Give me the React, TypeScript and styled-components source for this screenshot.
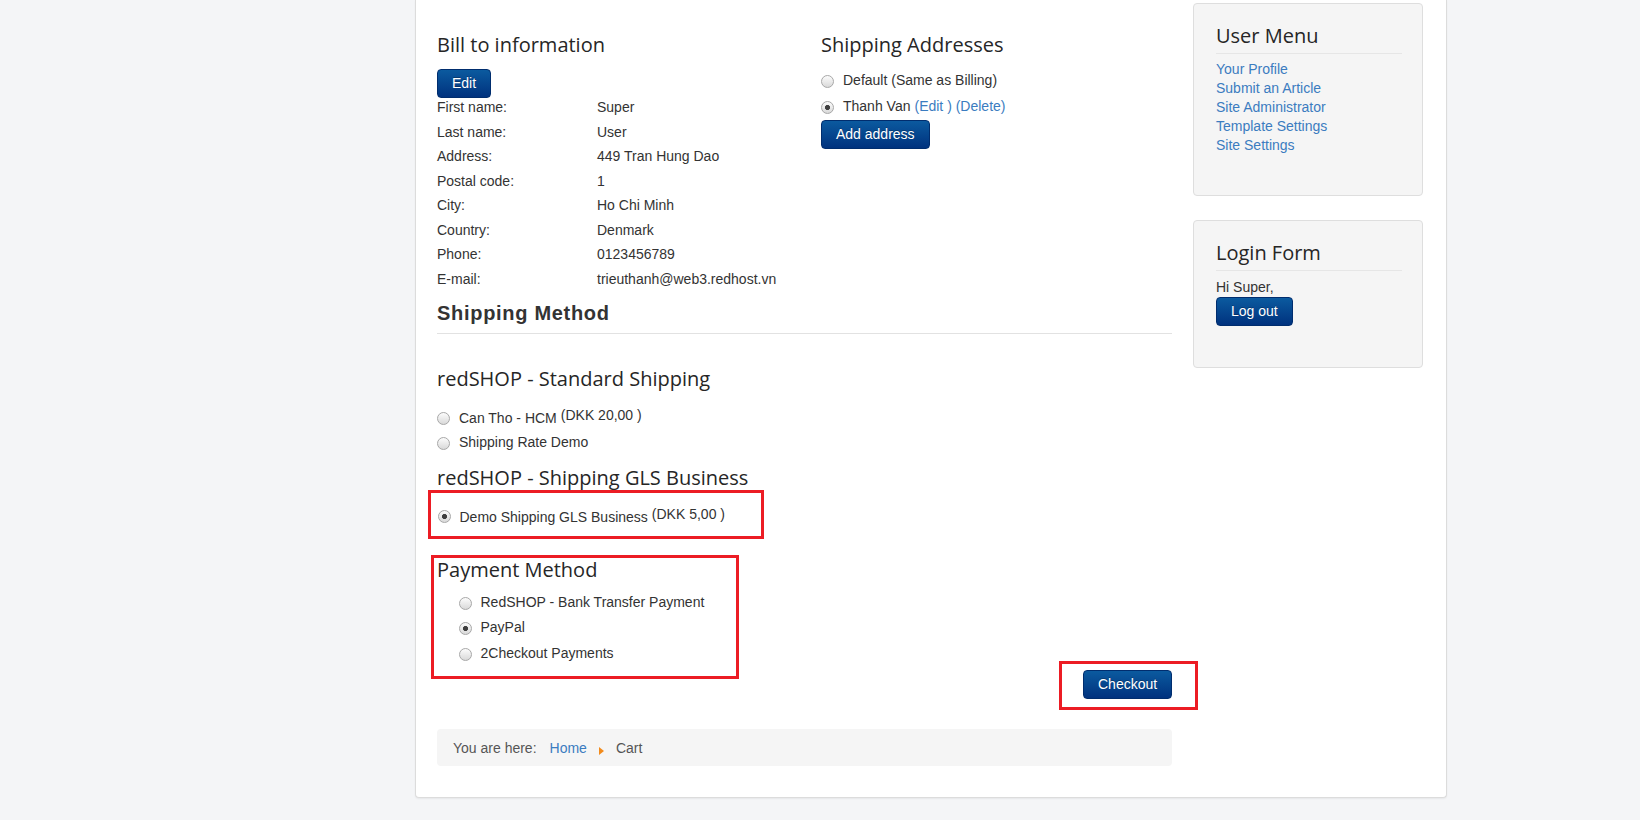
import React from 'react';
import styled, { createGlobalStyle } from 'styled-components';

const GlobalStyle = createGlobalStyle`
  html, body {
    margin: 0;
    padding: 0;
    background: #f4f5f7;
  }

  body {
    font-family: 'Liberation Sans', Arial, sans-serif;
    font-size: 14px;
    color: #333;
  }
`;

const LINK = '#3b7cc0';
const RED = '#ec1c24';

const Page = styled.div`
  min-height: 820px;
  background: #f4f5f7;
`;

const Container = styled.div`
  display: flex;
  box-sizing: border-box;
  width: 1032px;
  margin-left: 415px;
  padding: 3px 23px 31px 21px;
  background: #fff;
  border: 1px solid #dcdcdc;
  border-top: none;
  border-radius: 0 0 4px 4px;
  box-shadow: 0 1px 2px rgba(0, 0, 0, 0.06);
`;

const Main = styled.div`
  flex-shrink: 0;
  width: 735px;
  padding-top: 30px;
`;

const Sidebar = styled.aside`
  flex-shrink: 0;
  width: 230px;
  margin-left: 21px;
`;

const Heading = styled.h2<{ $mt?: number }>`
  margin: ${(p) => p.$mt ?? 0}px 0 0;
  font-family: 'Open Sans', 'Liberation Sans', sans-serif;
  font-size: 20px;
  font-weight: 400;
  line-height: 24px;
  color: #262626;
`;

const SectionTitle = styled.h3`
  margin: 7px 0 0;
  font-family: 'Liberation Sans', Arial, sans-serif;
  font-size: 20px;
  font-weight: 700;
  letter-spacing: 0.7px;
  line-height: 24px;
  color: #333;
`;

const Rule = styled.hr`
  margin: 8px 0 0;
  border: none;
  border-top: 1px solid #e2e2e2;
`;

const Button = styled.button<{ $mt?: number }>`
  display: inline-block;
  margin-top: ${(p) => p.$mt ?? 0}px;
  padding: 4px 14px;
  font-family: 'Liberation Sans', Arial, sans-serif;
  font-size: 14px;
  line-height: 19px;
  color: #fff;
  text-shadow: 0 -1px 0 rgba(0, 0, 0, 0.25);
  background: linear-gradient(to bottom, #0b5a9f, #00327e);
  border: 1px solid #002d6e;
  border-radius: 4px;
  cursor: pointer;
`;

const TopGrid = styled.div`
  display: grid;
  grid-template-columns: 384px 1fr;
  align-items: start;
`;

const Column = styled.div`
  display: flex;
  flex-direction: column;
  align-items: flex-start;
`;

const InfoTable = styled.dl`
  display: grid;
  grid-template-columns: 160px 1fr;
  margin: 0;
  align-self: stretch;

  dt,
  dd {
    margin: 0;
    line-height: 19px;
    padding-bottom: 5.5px;
    white-space: nowrap;
  }
`;

const RadioList = styled.div<{ $mt?: number; $indent?: number }>`
  display: flex;
  flex-direction: column;
  margin-top: ${(p) => p.$mt ?? 0}px;
  padding-left: ${(p) => p.$indent ?? 0}px;
`;

const RadioRow = styled.label<{ $h: number }>`
  display: flex;
  align-items: center;
  height: ${(p) => p.$h}px;
  white-space: nowrap;
  color: #333;
`;

const RadioText = styled.span`
  line-height: 19px;
`;

const Radio = styled.input.attrs({ type: 'radio', readOnly: true })`
  appearance: none;
  flex-shrink: 0;
  box-sizing: border-box;
  width: 13px;
  height: 13px;
  margin: 2px 9px 0 0;
  border: 1px solid #a8a8a8;
  border-radius: 50%;
  background: linear-gradient(to bottom, #fcfcfc, #d9d9d9);

  &:checked {
    background: radial-gradient(circle, #3f3f3f 0 2.2px, transparent 2.9px),
      linear-gradient(to bottom, #fcfcfc, #d9d9d9);
  }
`;

const Price = styled.span`
  margin-left: 4px;
  vertical-align: 3px;
`;

const Link = styled.a`
  color: ${LINK};
  text-decoration: none;
`;

const AddressLinks = styled.span`
  margin-left: 4px;
  color: ${LINK};
`;

const RedBox = styled.div<{ $w: number; $pad: string; $ml?: number }>`
  box-sizing: border-box;
  width: ${(p) => p.$w}px;
  margin-left: ${(p) => p.$ml ?? 0}px;
  padding: ${(p) => p.$pad};
  border: 3px solid ${RED};
`;

const PaymentRow = styled.div`
  display: flex;
  justify-content: space-between;
  align-items: flex-start;
  margin-top: 16px;
`;

const CheckoutBox = styled(RedBox)`
  margin-top: 106px;
  margin-right: -26px;
`;

const Breadcrumb = styled.div`
  display: flex;
  align-items: center;
  height: 37px;
  margin-top: 19px;
  padding: 0 16px;
  background: #f5f5f5;
  border-radius: 4px;
  color: #555;
`;

const CrumbLabel = styled.span`
  margin-right: 13px;
`;

const Divider = styled.span`
  display: inline-block;
  width: 0;
  height: 0;
  margin: 6px 12px 0;
  border-left: 5px solid #f28b1c;
  border-top: 4px solid transparent;
  border-bottom: 4px solid transparent;
`;

const Panel = styled.div<{ $pb: number }>`
  box-sizing: border-box;
  padding: 20px 20px ${(p) => p.$pb}px 22px;
  background: #f5f5f5;
  border: 1px solid #dedede;
  border-radius: 4px;

  & + & {
    margin-top: 24px;
  }
`;

const PanelTitle = styled(Heading)<{ $gap: number }>`
  padding-bottom: 5px;
  margin-bottom: ${(p) => p.$gap}px;
  border-bottom: 1px solid #e6e6e6;
`;

const MenuLink = styled.a`
  display: block;
  line-height: 19px;
  color: ${LINK};
  text-decoration: none;
`;

const Greeting = styled.div`
  line-height: 19px;
`;

const billing: [string, string][] = [
  ['First name:', 'Super'],
  ['Last name:', 'User'],
  ['Address:', '449 Tran Hung Dao'],
  ['Postal code:', '1'],
  ['City:', 'Ho Chi Minh'],
  ['Country:', 'Denmark'],
  ['Phone:', '0123456789'],
  ['E-mail:', 'trieuthanh@web3.redhost.vn'],
];

const payments = [
  { name: 'RedSHOP - Bank Transfer Payment', checked: false },
  { name: 'PayPal', checked: true },
  { name: '2Checkout Payments', checked: false },
];

const userMenu = [
  'Your Profile',
  'Submit an Article',
  'Site Administrator',
  'Template Settings',
  'Site Settings',
];

export default function App() {
  return (
    <Page>
      <GlobalStyle />
      <Container>
        <Main>
          <TopGrid>
            <Column>
              <Heading>Bill to information</Heading>
              <Button $mt={12}>Edit</Button>
              <InfoTable>
                {billing.map(([label, value]) => (
                  <React.Fragment key={label}>
                    <dt>{label}</dt>
                    <dd>{value}</dd>
                  </React.Fragment>
                ))}
              </InfoTable>
            </Column>
            <Column>
              <Heading>Shipping Addresses</Heading>
              <RadioList $mt={10}>
                <RadioRow $h={26}>
                  <Radio name="addr" />
                  <RadioText>Default (Same as Billing)</RadioText>
                </RadioRow>
                <RadioRow $h={26}>
                  <Radio name="addr" defaultChecked />
                  <RadioText>
                    Thanh Van
                    <AddressLinks>
                      <Link href="#">(Edit )</Link> <Link href="#">(Delete)</Link>
                    </AddressLinks>
                  </RadioText>
                </RadioRow>
              </RadioList>
              <Button $mt={1}>Add address</Button>
            </Column>
          </TopGrid>

          <SectionTitle>Shipping Method</SectionTitle>
          <Rule />

          <Heading $mt={33}>redSHOP - Standard Shipping</Heading>
          <RadioList $mt={13.5}>
            <RadioRow $h={25}>
              <Radio name="ship" />
              <RadioText>
                Can Tho - HCM<Price>(DKK 20,00 )</Price>
              </RadioText>
            </RadioRow>
            <RadioRow $h={25}>
              <Radio name="ship" />
              <RadioText>Shipping Rate Demo</RadioText>
            </RadioRow>
          </RadioList>

          <Heading $mt={11.5}>redSHOP - Shipping GLS Business</Heading>
          <RedBox $w={336} $ml={-9} $pad="10px 0 8px 6.5px">
            <RadioRow $h={25}>
              <Radio name="ship" defaultChecked />
              <RadioText>
                Demo Shipping GLS Business<Price>(DKK 5,00 )</Price>
              </RadioText>
            </RadioRow>
          </RedBox>

          <PaymentRow>
            <RedBox $w={308} $ml={-6} $pad="0 0 10px 3px">
              <Heading>Payment Method</Heading>
              <RadioList $mt={7.5} $indent={21.5}>
                {payments.map((p) => (
                  <RadioRow $h={25.5} key={p.name}>
                    <Radio name="pay" defaultChecked={p.checked} />
                    <RadioText>{p.name}</RadioText>
                  </RadioRow>
                ))}
              </RadioList>
            </RedBox>
            <CheckoutBox $w={139} $pad="6px 23px 8px 21px">
              <Button>Checkout</Button>
            </CheckoutBox>
          </PaymentRow>

          <Breadcrumb>
            <CrumbLabel>You are here:</CrumbLabel>
            <Link href="#">Home</Link>
            <Divider />
            <span>Cart</span>
          </Breadcrumb>
        </Main>

        <Sidebar>
          <Panel $pb={40}>
            <PanelTitle $gap={5.5}>User Menu</PanelTitle>
            {userMenu.map((item) => (
              <MenuLink href="#" key={item}>
                {item}
              </MenuLink>
            ))}
          </Panel>
          <Panel $pb={41}>
            <PanelTitle $gap={7.5}>Login Form</PanelTitle>
            <Greeting>Hi Super,</Greeting>
            <Button>Log out</Button>
          </Panel>
        </Sidebar>
      </Container>
    </Page>
  );
}
